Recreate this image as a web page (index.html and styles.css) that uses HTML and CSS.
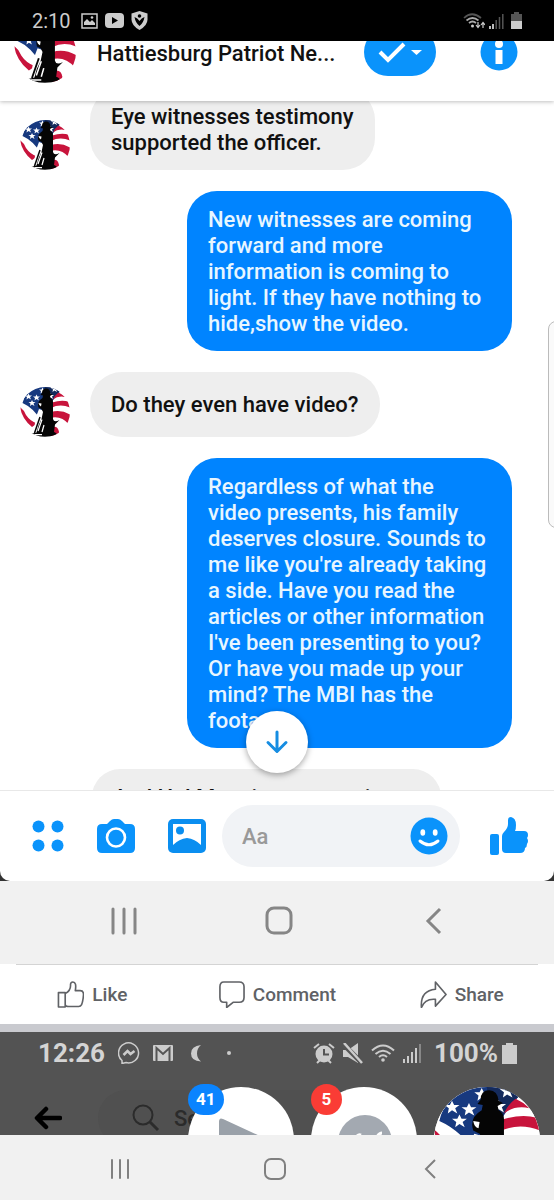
FILE: index.html
```html
<!DOCTYPE html>
<html lang="en">
<head>
    <meta charset="utf-8">
    <title>Messages</title>
    <meta name="viewport" content="width=device-width, initial-scale=1.0">
    <link rel="stylesheet" href="styles.css">
</head>
<body>

    <!-- shared flag picture -->
    <svg class="defs" aria-hidden="true">
        <defs>
            <clipPath id="round"><circle cx="50" cy="50" r="50"/></clipPath>
            <symbol id="flag" viewBox="0 0 100 100">
                <g clip-path="url(#round)">
                    <rect width="100" height="100" fill="#fff"/>
                    <path d="M5 32 Q10 8 40 -2 H70 Q76 2 80 9 Q70 18 62 34 L44 70 Q28 42 5 32z" fill="#17397f"/>
                    <path d="M50 0 H72 L80 9 Q68 18 62 34 L50 30z" fill="#142a5c"/>
                    <path d="M77 11 Q84 14 90 20 Q76 17 66 25 Q70 16 77 11z" fill="#c8143c"/>
                    <path d="M64 31 Q82 25 97 29 L100 41 Q80 33 62 42z" fill="#c8143c"/>
                    <path d="M62 50 Q82 44 102 56 Q102 66 98 75 Q82 56 60 62z" fill="#c8143c"/>
                    <path d="M0 40 Q8 46 12 56 Q20 68 34 73 L24 80 Q4 64 0 40z" fill="#c8143c"/>
                    <path d="M66 80 Q76 78 78 90 L76 98 H62z" fill="#c8143c"/>
                    <g fill="#fff">
                        <path id="st" d="M17 13l2 4 5 0-4 3 2 5-5-3-4 3 1-5-4-3 5 0z"/>
                        <use href="#st" x="16" y="2"/>
                        <use href="#st" x="7" y="13"/>
                        <use href="#st" x="28" y="-12"/>
                        <use href="#st" x="44" y="-1"/>
                        <use href="#st" x="52" y="-15"/>
                    </g>
                    <path d="M38 44 Q30 62 28 88 L48 92 L56 50z" fill="#fff"/>
                    <path d="M44 12 Q44 3 52 3 Q60 3 61 13 L65 15 L60 18 L61 22 Q67 25 66 34 L66 64 Q68 72 79 66 L70 75 L68 90 Q75 92 75 99 L22 100 L21 94 L33 91 Q36 76 43 64 L46 50 L43 44 L37 41 Q33 29 45 22 L46 17 L41 16z" fill="#050505"/>
                    <path d="M40 60 L29 92" stroke="#050505" stroke-width="3"/>
                    <path d="M44 65 L36 88 M48 76 L44 90 M27 95 H44" stroke="#fff" stroke-width="2.5"/>
                    <path d="M37 32 Q38 38 42 39 L43 33z" fill="#fff"/>
                </g>
            </symbol>
        </defs>
    </svg>

    <div class="status">
        <span class="time">2:10</span>
        <svg width="17" height="16" viewBox="0 0 17 16"><rect x="1" y="1" width="15" height="14" fill="none" stroke="#ccc" stroke-width="1.5"/><path d="M3 12V9l3-3 3 3 2-2 3 3v2z" fill="#ccc"/><circle cx="11" cy="4.5" r="1.3" fill="#ccc"/></svg>
        <svg width="19" height="15" viewBox="0 0 19 15"><rect width="19" height="15" rx="4" fill="#ccc"/><path d="M7 4l6 3.5-6 3.5z" fill="#000"/></svg>
        <svg width="17" height="19" viewBox="0 0 17 19"><path d="M8.5 0l8 2.5v6q0 6-8 10.5Q.5 14.5.5 8.500v-6z" fill="#ccc"/><path d="M3.5 6q3 1 5 4 2-3 5-4-1 6-5 9-4-3-5-9z" fill="#000"/><circle cx="8.5" cy="5" r="1.8" fill="#000"/></svg>
        <span class="spacer"></span>
        <div class="signals">
            <svg width="22" height="16" viewBox="0 0 22 16"><g fill="none" stroke="#aaa" stroke-width="1.7"><path d="M1 5q8-7.5 17 0" stroke="#555"/><path d="M3.5 7.5q6-5 12 0M6 10q3.5-3 7 0"/><path d="M15 9v5M13 12l2 2.500 2-2.500M20 15v-5M18 12l2-2.500 2 2.500" stroke="#ccc" stroke-width="1.2"/></g><circle cx="9.5" cy="13" r="1.5" fill="#ccc"/></svg>
            <svg width="15" height="16" viewBox="0 0 15 16"><path d="M1 13v3M4 11v5" stroke="#ddd" stroke-width="1.7"/><path d="M7.2 7v9M10.5 4v12M13.8 1v15" stroke="#555" stroke-width="1.5"/></svg>
        </div>
        <svg width="11" height="17" viewBox="0 0 11 17"><path d="M3 0h5v2h3v7H0V2h3z" fill="#555"/><path d="M0 9h11v8H0z" fill="#ccc"/></svg>
    </div>

    <header class="header">
        <div class="header-row">
            <svg class="avatar-lg"><use href="#flag"/></svg>
            <h1>Hattiesburg Patriot Ne...</h1>
            <button class="manage" aria-label="Manage">
                <svg width="46" height="22" viewBox="0 0 46 22"><path d="M3 11l8 8L27 3" fill="none" stroke="#fff" stroke-width="4"/><path d="M34 9h11l-5.5 5z" fill="#fff"/></svg>
            </button>
            <button class="info" aria-label="Info">
                <svg width="38" height="38" viewBox="0 0 38 38"><circle cx="19" cy="19" r="18.5" fill="#0a93fb"/><circle cx="19" cy="11" r="4" fill="#fff"/><rect x="15.5" y="17" width="7" height="14" fill="#fff"/></svg>
            </button>
        </div>
    </header>

    <main class="chat">
        <div class="msg">
            <svg class="avatar"><use href="#flag"/></svg>
            <p class="bubble">Eye witnesses testimony<br>supported the officer.</p>
        </div>
        <div class="msg mine">
            <p class="bubble">New witnesses are coming forward and more information is coming to light. If they have nothing to hide,show the video.</p>
        </div>
        <div class="msg">
            <svg class="avatar"><use href="#flag"/></svg>
            <p class="bubble single">Do they even have video?</p>
        </div>
        <div class="msg mine">
            <p class="bubble">Regardless of what the video presents, his family deserves closure. Sounds to me like you're already taking a side. Have you read the articles or other information I've been presenting to you? Or have you made up your mind? The MBI has the footage.</p>
        </div>
        <div class="msg">
            <p class="bubble no-avatar">And Hal Marx is a person in our</p>
        </div>
        <div class="handle"></div>
        <button class="down" aria-label="Scroll down">
            <svg width="24" height="26" viewBox="0 0 24 26"><path d="M12 3v19M3 13.5l9 9 9-9" fill="none" stroke="#168de2" stroke-width="3" stroke-linecap="round" stroke-linejoin="round"/></svg>
        </button>
    </main>

    <div class="composer-wrap">
        <form class="composer">
            <button type="button" aria-label="More">
                <svg width="32" height="32" viewBox="0 0 32 32" fill="#0a93fb"><circle cx="6.5" cy="6.5" r="6"/><circle cx="25.5" cy="6.5" r="6"/><circle cx="6.5" cy="25.5" r="6"/><circle cx="25.5" cy="25.5" r="6"/></svg>
            </button>
            <button type="button" aria-label="Camera">
                <svg width="40" height="36" viewBox="0 0 40 36"><path d="M6 6h5l3-3q2-2 4-2h4q2 0 4 2l3 3h5q5 0 5 5v19q0 5-5 5H6q-5 0-5-5V11q0-5 5-5z" fill="#0a93fb"/><circle cx="20" cy="19.5" r="9" fill="none" stroke="#fff" stroke-width="2.6"/></svg>
            </button>
            <button type="button" aria-label="Gallery">
                <svg width="38" height="36" viewBox="0 0 38 36"><rect x="0" y="1" width="38" height="34" rx="5" fill="#0a8ef0"/><path d="M5 6h28v21q-6-6-14-7-8 1-14 7z" fill="#fff"/><circle cx="12" cy="12.5" r="4" fill="#0a8ef0"/></svg>
            </button>
            <div class="field">
                <input type="text" placeholder="Aa" aria-label="Message">
                <button type="button" aria-label="Emoji">
                    <svg width="38" height="38" viewBox="0 0 38 38"><circle cx="19" cy="19" r="18.5" fill="#0a93fb"/><ellipse cx="12.8" cy="15.5" rx="2.4" ry="3.2" fill="#fff"/><ellipse cx="25.2" cy="15.5" rx="2.4" ry="3.2" fill="#fff"/><path d="M10 24q9 7.5 18 0" fill="none" stroke="#fff" stroke-width="3" stroke-linecap="round"/></svg>
                </button>
            </div>
            <button type="button" aria-label="Thumbs up">
                <svg width="38" height="40" viewBox="0 0 38 40" fill="#0a93fb"><rect x="0" y="18" width="9" height="21" rx="2"/><path d="M12 20q0-2 2-4 4-4 4-8V4q0-3 3-3 5 1 5 8 0 4-1 6h9q4 0 4 4 0 2-1 3 2 3 0 6 0 3-2 4 0 5-5 5H16q-4 0-4-4z"/></svg>
            </button>
        </form>
    </div>

    <nav class="nav nav-inner">
        <svg width="26" height="28" viewBox="0 0 26 28"><path d="M2 2v24M13 2v24M24 2v24" stroke="#868686" stroke-width="3" stroke-linecap="round"/></svg>
        <svg width="28" height="29" viewBox="0 0 28 29"><rect x="2" y="2" width="24" height="25" rx="7" fill="none" stroke="#868686" stroke-width="3"/></svg>
        <svg width="18" height="28" viewBox="0 0 18 28"><path d="M15 2L3 14l12 12" fill="none" stroke="#868686" stroke-width="3"/></svg>
    </nav>

    <div class="actions">
        <button><svg width="27" height="27" viewBox="0 0 28 28"><path d="M1.5 12h7V27h-7zM8.5 13q6-3 5.500-9 0-3 2.500-3 4 0 2.500 9h5q3.500 0 3.500 4-.5 7-2 10.500-1 2-3 2H12q-3 0-3.500-2"/></svg>Like</button>
        <button><svg width="27" height="27" viewBox="0 0 28 28"><path d="M6 1h16q5 0 5 5v11q0 5-5 5h-6l-7 5.500V22H6q-4 0-4-5V6q0-5 4-5z"/></svg>Comment</button>
        <button><svg width="27" height="27" viewBox="0 0 28 28"><path d="M16 1l11 13-11 12v-7Q5 18 1.5 27.500 0 10 16 8.500z"/></svg>Share</button>
    </div>

    <section class="feed">
        <div class="feed-status">
            <span class="time">12:26</span>
            <svg width="22" height="22" viewBox="0 0 22 22" fill="none" stroke="#ccc" stroke-width="1.5"><path d="M4 18.500A10 10 0 1 1 8 20.600L4 21.500z"/><path d="M5.500 13l4-4 3 3 4-3" stroke-width="2.500"/></svg>
            <svg width="20" height="16" viewBox="0 0 20 16"><rect width="20" height="16" rx="1" fill="#ccc"/><path d="M3.5 16V3l6.500 6 6.500-6v13" fill="none" stroke="#555" stroke-width="2"/></svg>
            <svg class="moon" width="12" height="17" viewBox="0 0 12 17"><path d="M11 0Q1 1 1 8.500 1 16 11 16.500 7 13 7 8.500 7 3 11 0z" fill="#ccc"/></svg>
            <span class="dot"></span>
            <span class="spacer"></span>
            <div class="feed-icons">
                <svg width="22" height="21" viewBox="0 0 22 21"><circle cx="11" cy="11" r="8.5" fill="#ccc"/><path d="M1 5l5-4M21 5l-5-4M4 20l3-3M18 20l-3-3" stroke="#ccc" stroke-width="2"/><path d="M11 6v5.500h5" fill="none" stroke="#555" stroke-width="2"/></svg>
                <svg width="20" height="21" viewBox="0 0 20 21"><path d="M0 7h5l10-7v20L5 14H0z" fill="#ccc"/><path d="M-1 0l20 20" stroke="#555" stroke-width="5"/><path d="M1 0l18 20" stroke="#ccc" stroke-width="2.5"/></svg>
                <svg width="24" height="18" viewBox="0 0 24 18"><path d="M1 6.500q11-10 22 0M4.500 10q7.500-6.500 15 0M8 13q4-3.500 8 0" fill="none" stroke="#ccc" stroke-width="2"/><circle cx="12" cy="16" r="1.8" fill="#ccc"/></svg>
                <svg width="18" height="20" viewBox="0 0 18 20"><path d="M1 16v4M5 13v7M9 9v11M13 5v15" stroke="#ccc" stroke-width="2"/><path d="M17 1v19" stroke="#888" stroke-width="2"/></svg>
            </div>
            <div class="power">
                <span class="time">100%</span>
                <svg width="15" height="21" viewBox="0 0 15 21"><path d="M4 0h7v2h4v19H0V2h4z" fill="#ccc"/></svg>
            </div>
        </div>
        <div class="feed-bar">
            <button aria-label="Back"><svg width="28" height="24" viewBox="0 0 28 24"><path d="M26 12H4M12 3l-9 9 9 9" fill="none" stroke="#000" stroke-width="4.5" stroke-linecap="round" stroke-linejoin="round"/></svg></button>
            <label class="search">
                <svg width="28" height="28" viewBox="0 0 28 28" fill="none" stroke="#2b2b2b"><circle cx="11" cy="11" r="9.5" stroke-width="2"/><path d="M18 18l8 8" stroke-width="3"/></svg>
                <input type="text" placeholder="Search" aria-label="Search">
            </label>
        </div>
        <div class="heads">
            <div class="head">
                <svg viewBox="0 0 106 106"><path d="M31 35q0-5 4-3l37 17v20H31z" fill="#9aa1a9"/></svg>
                <span class="badge">41</span>
            </div>
            <div class="head">
                <svg viewBox="0 0 106 106"><circle cx="54" cy="55" r="27" fill="#a3a9b1"/><path d="M46 49q2-2 4-1M66 50q2-4 5-4" stroke="#fff" stroke-width="3" fill="none"/></svg>
                <span class="badge red">5</span>
            </div>
            <div class="head">
                <svg><use href="#flag"/></svg>
            </div>
        </div>
    </section>

    <nav class="nav nav-outer">
        <svg width="20" height="22" viewBox="0 0 20 22"><path d="M2 2v18M10 2v18M18 2v18" stroke="#808080" stroke-width="2" stroke-linecap="round"/></svg>
        <svg width="22" height="22" viewBox="0 0 22 22"><rect x="1" y="1" width="20" height="20" rx="6" fill="none" stroke="#808080" stroke-width="2"/></svg>
        <svg width="14" height="22" viewBox="0 0 14 22"><path d="M12 2l-9 9 9 9" fill="none" stroke="#808080" stroke-width="2"/></svg>
    </nav>

</body>
</html>
```
FILE: styles.css
```css
*{
    margin:0;
    padding:0;
    box-sizing:border-box;
}

body{
    display:flex;
    flex-direction:column;
    height:100vh;
    background-color:#fff;
    font-family:Roboto, sans-serif;
    overflow:hidden;
}

svg{
    display:block;
    flex-shrink:0;
}

button{
    display:flex;
    align-items:center;
    justify-content:center;
    border:none;
    background:none;
    font-family:inherit;
}

input{
    flex:1;
    width:100%;
    min-width:0;
    border:none;
    outline:none;
    background:none;
    font-family:inherit;
    font-size:22px;
    font-weight:500;
}

.defs{
    position:absolute;
    width:0;
    height:0;
}

.spacer{
    flex:1;
}

/* top status bar */

.status{
    position:relative;
    z-index:3;
    display:flex;
    align-items:center;
    gap:7px;
    height:41px;
    padding:0 32px;
    background-color:#000;
}

.status .time{
    margin-right:3px;
    color:#ccc;
    font-size:20px;
}

.signals{
    display:flex;
    gap:4px;
}

/* chat header, partly scrolled under the status bar */

.header{
    position:relative;
    z-index:2;
    padding-bottom:18px;
    background-color:#fff;
    box-shadow:0 1px 4px rgba(0,0,0,.25);
}

.header-row{
    display:flex;
    align-items:center;
    height:62px;
    margin-top:-20px;
    padding:0 36px 0 14px;
}

.avatar-lg{
    width:62px;
    height:62px;
    margin-right:21px;
}

h1{
    flex:1;
    padding-top:3px;
    font-size:22px;
    font-weight:500;
    color:#111;
    white-space:nowrap;
}

.manage{
    width:72px;
    height:48px;
    margin-right:44px;
    border-radius:24px;
    background-color:#0a93fb;
}

/* messages */

.chat{
    position:relative;
    flex:1;
    display:flex;
    flex-direction:column;
    gap:21px;
    min-height:0;
    padding:0 42px 0 20px;
    overflow:hidden;
}

.msg{
    display:flex;
    flex-shrink:0;
    align-items:flex-end;
    gap:20px;
}

.msg:first-child{
    margin-top:-13px;
}

.avatar{
    width:50px;
    height:50px;
}

.bubble{
    padding:16px 21px 14px;
    border-radius:32px;
    background-color:#eee;
    color:#111;
    font-size:22px;
    font-weight:500;
    line-height:26px;
}

.single{
    padding:20px 21px 19px;
}

.no-avatar{
    margin-left:72px;
}

.mine{
    justify-content:flex-end;
}

.mine .bubble{
    max-width:325px;
    border-radius:30px;
    background-color:#0084ff;
    color:#e8f6ff;
}

.handle{
    position:absolute;
    top:220px;
    right:-10px;
    width:16px;
    height:207px;
    border:1px solid #bbb;
    border-radius:8px;
    background-color:#fafafa;
}

.down{
    position:absolute;
    bottom:17px;
    left:50%;
    width:62px;
    height:62px;
    border-radius:50%;
    background-color:#fff;
    box-shadow:0 2px 6px rgba(0,0,0,.35);
    transform:translateX(-50%);
}

/* message box */

.composer-wrap{
    background-color:#333;
}

.composer{
    display:flex;
    align-items:center;
    padding:14px 26px 14px 32px;
    border-top:1px solid #e8e8e8;
    border-radius:0 0 10px 10px;
    background-color:#fff;
}

.composer > button{
    margin-right:32px;
}

.composer > button:nth-child(3){
    margin-right:16px;
}

.composer > button:last-child{
    margin:0 0 0 30px;
}

.field{
    display:flex;
    flex:1;
    align-items:center;
    min-width:0;
    height:62px;
    padding:0 12px 0 20px;
    border-radius:31px;
    background-color:#f1f3f6;
}

.field input::placeholder{
    color:#999;
}

/* android buttons */

.nav{
    display:grid;
    grid-template-columns:repeat(3, 1fr);
    place-items:center;
    background-color:#f1f1f1;
}

.nav-inner{
    height:83px;
    padding:0 43px 4px 47px;
}

.nav-outer{
    height:65px;
    padding:2px 47px 0 42px;
}

/* like, comment, share */

.actions{
    display:grid;
    grid-template-columns:repeat(3, 1fr);
    height:60px;
    background:linear-gradient(#d4d4d4, #d4d4d4) 50% 0 / calc(100% - 32px) 1px no-repeat;
}

.actions button{
    gap:8px;
    color:#606266;
    font-size:19px;
    font-weight:500;
}

.actions svg{
    fill:none;
    stroke:#606266;
    stroke-width:1.7;
    stroke-linejoin:round;
}

/* dimmed feed under the chat heads */

.feed{
    position:relative;
    height:111px;
    border-top:8px solid #c9cacf;
    background-color:#535353;
    overflow:hidden;
}

.feed-status{
    display:flex;
    align-items:center;
    gap:13px;
    height:42px;
    padding:0 37px 0 38px;
}

.feed-status .time{
    color:#d4d4d4;
    font-size:26px;
    font-weight:700;
}

.moon{
    margin:0 12px 0 4px;
}

.dot{
    width:4px;
    height:4px;
    border-radius:50%;
    background-color:#ccc;
}

.feed-icons{
    display:flex;
    align-items:center;
    gap:8px;
}

.power{
    display:flex;
    align-items:center;
    gap:4px;
}

.feed-bar{
    display:flex;
    align-items:center;
    gap:36px;
    height:56px;
    margin-top:16px;
    padding:0 34px;
}

.search{
    display:flex;
    flex:1;
    align-items:center;
    gap:14px;
    height:56px;
    padding-left:34px;
    border-radius:28px;
    background-color:#505050;
}

.search input::placeholder{
    color:#2b2b2b;
}

.heads{
    position:absolute;
    top:55px;
    right:14px;
    display:flex;
    gap:17px;
}

.head{
    position:relative;
    width:106px;
    height:106px;
    border-radius:50%;
    background-color:#fff;
}

.head svg{
    width:106px;
    height:106px;
}

.badge{
    position:absolute;
    top:-3px;
    left:0;
    min-width:31px;
    height:31px;
    padding:0 8px;
    border-radius:16px;
    background-color:#0a84ff;
    color:#fff;
    font-size:17px;
    font-weight:700;
    line-height:31px;
    text-align:center;
}

.red{
    background-color:#fa3c35;
}
```
